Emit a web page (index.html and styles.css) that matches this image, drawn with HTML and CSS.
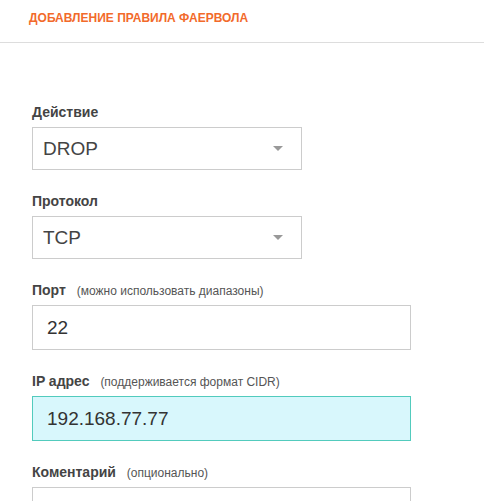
FILE: index.html
```html
<!DOCTYPE html>
<html lang="ru">
<head>
  <meta charset="UTF-8" />
  <title>Добавление правила фаервола</title>
  <link rel="stylesheet" href="styles.css">
</head>
<body>

<header class="page-head">
  <h1>Добавление правила фаервола</h1>
</header>

<form class="rule-form">
  <div class="field">
    <label for="action">Действие</label>
    <div class="select-wrap">
      <select id="action">
        <option>DROP</option>
        <option>ACCEPT</option>
        <option>REJECT</option>
      </select>
    </div>
  </div>

  <div class="field">
    <label for="proto">Протокол</label>
    <div class="select-wrap">
      <select id="proto">
        <option>TCP</option>
        <option>UDP</option>
      </select>
    </div>
  </div>

  <div class="field">
    <label for="port">Порт <span class="hint">(можно использовать диапазоны)</span></label>
    <input type="text" id="port" value="22">
  </div>

  <div class="field">
    <label for="ip">IP адрес <span class="hint">(поддерживается формат CIDR)</span></label>
    <input type="text" id="ip" class="focused" value="192.168.77.77">
  </div>

  <div class="field">
    <label for="comment">Коментарий <span class="hint">(опционально)</span></label>
    <input type="text" id="comment" value="">
  </div>
</form>

</body>
</html>
```

FILE: styles.css
```css
body {
  font-family: 'Liberation Sans', Arial, sans-serif;
  background-color: #fff;
  margin: 0;
  padding: 0;
}

.page-head {
  padding: 8px 29px 14px;
  border-bottom: 1px solid #ddd;
}

.page-head h1 {
  margin: 0;
  font-size: 12px;
  line-height: 20px;
  font-weight: bold;
  text-transform: uppercase;
  color: #f26a2b;
}

.rule-form {
  padding: 61px 32px 0;
}

.field {
  margin-bottom: 23px;
}

.field label {
  display: block;
  margin-bottom: 6px;
  font-size: 14px;
  line-height: 17px;
  font-weight: bold;
  color: #444;
}

.hint {
  margin-left: 7px;
  font-size: 12px;
  line-height: 1;
  font-weight: normal;
  color: #555;
}

.select-wrap {
  position: relative;
  width: 270px;
}

.select-wrap::after {
  content: "";
  position: absolute;
  right: 19px;
  top: 19px;
  border-left: 5px solid transparent;
  border-right: 5px solid transparent;
  border-top: 5px solid #999;
}

select {
  -webkit-appearance: none;
  appearance: none;
  display: block;
  width: 270px;
  height: 43px;
  margin: 0;
  padding: 0 10px;
  border: 1px solid #ccc;
  border-radius: 0;
  background: #fff;
  font-family: 'Liberation Sans', Arial, sans-serif;
  font-size: 19px;
  color: #444;
}

input[type="text"] {
  display: block;
  box-sizing: border-box;
  width: 379px;
  height: 45px;
  margin: 0;
  padding: 0 14px;
  border: 1px solid #ccc;
  border-radius: 0;
  background: #fff;
  font-family: 'Liberation Sans', Arial, sans-serif;
  font-size: 19px;
  color: #333;
  outline: none;
}

input.focused {
  background-color: #d8f7fc;
  border-color: #52cbbd;
}
```
